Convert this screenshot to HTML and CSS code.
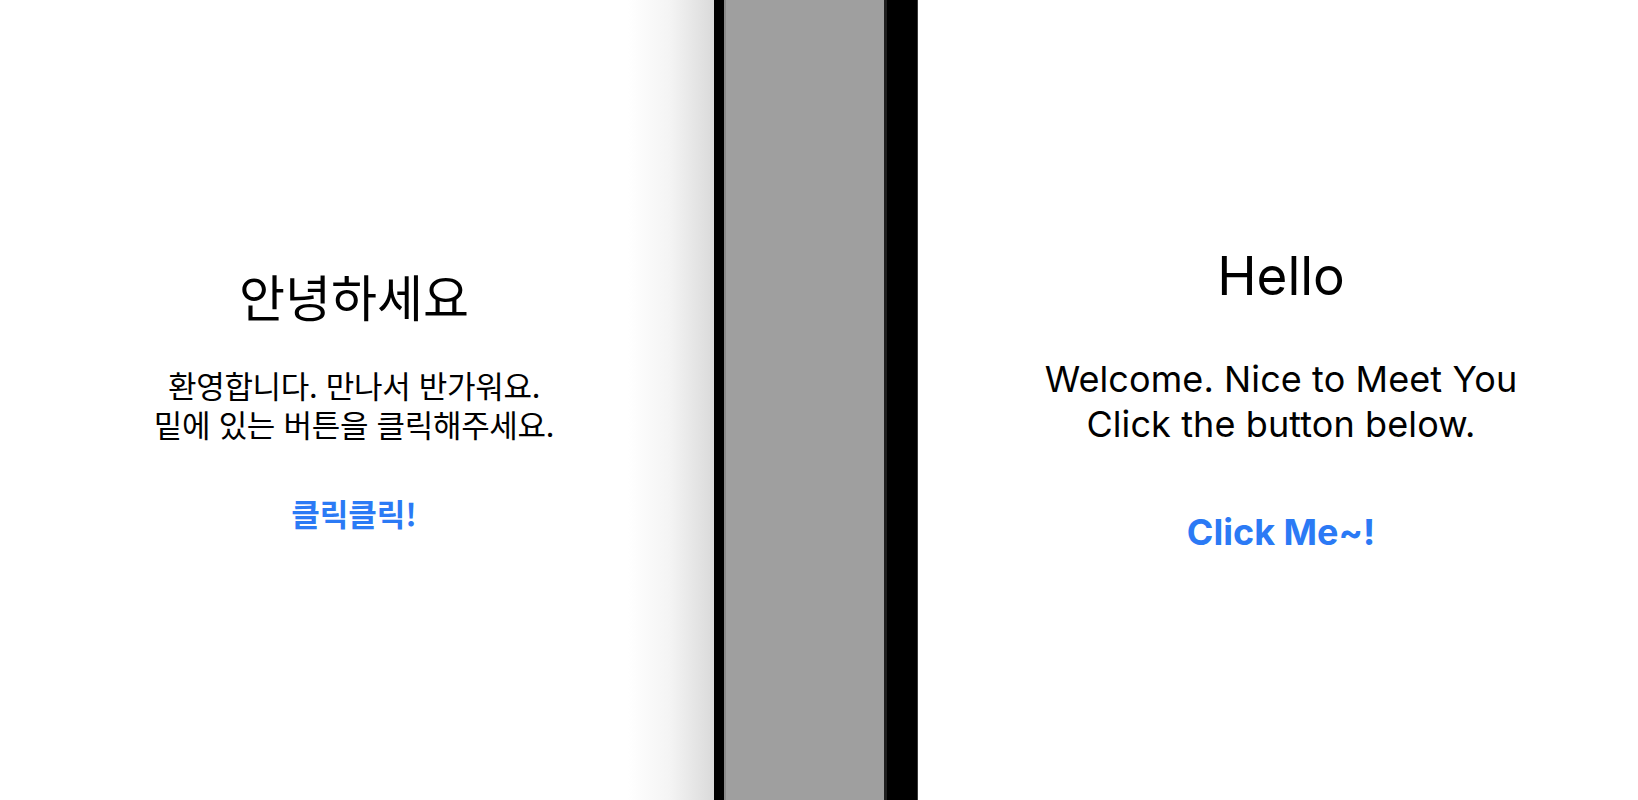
FILE: index.html
```html
<!DOCTYPE html>
<html lang="ko">
<head>
<meta charset="utf-8">
<title>Hello</title>
<link rel="stylesheet" href="styles.css">
</head>
<body>
<div class="screen">
  <section class="panel panel-left">
    <h1 class="title title-ko">안녕하세요</h1>
    <p class="message message-ko">환영합니다. 만나서 반가워요.
밑에 있는 버튼을 클릭해주세요.</p>
    <button class="action action-ko" type="button">클릭클릭!</button>
  </section>
  <div class="divider">
    <div class="edge-black"></div>
    <div class="edge-light"></div>
    <div class="gray-block"></div>
    <div class="edge-dark"></div>
    <div class="black-block"></div>
    <div class="edge-faint"></div>
  </div>
  <section class="panel panel-right">
    <h1 class="title title-en">Hello</h1>
    <p class="message message-en">Welcome. Nice to Meet You
Click the button below.</p>
    <button class="action action-en" type="button">Click Me~!</button>
  </section>
</div>
</body>
</html>
```
FILE: styles.css
```css
html, body {
  margin: 0;
  padding: 0;
  background: #ffffff;
}

.screen {
  display: flex;
  width: 1638px;
  height: 800px;
  overflow: hidden;
}

.panel {
  display: flex;
  flex-direction: column;
  align-items: center;
  box-sizing: border-box;
  color: #000;
}

.panel-left {
  width: 714px;
  padding-right: 6px;
  padding-top: 262px;
  background: linear-gradient(90deg, #ffffff 0, #ffffff 628px, #f4f4f4 670px, #dadada 714px);
  font-family: "Noto Sans CJK KR", "Noto Sans", sans-serif;
}

.panel-right {
  flex: 1;
  padding-top: 243px;
  padding-left: 6px;
  background: #ffffff;
  font-family: "Inter", "Liberation Sans", sans-serif;
}

.title {
  margin: 0;
  font-weight: 400;
}

.title-ko {
  font-size: 50px;
  line-height: 66px;
}

.title-en {
  font-size: 53px;
  line-height: 66px;
}

.message {
  margin: 0;
  text-align: center;
  font-weight: 400;
  white-space: pre-line;
}

.message-ko {
  margin-top: 37px;
  font-size: 31px;
  line-height: 39px;
  letter-spacing: -0.3px;
}

.message-en {
  margin-top: 48px;
  font-size: 36px;
  line-height: 45px;
  letter-spacing: 0.1px;
}

.action {
  border: 0;
  background: none;
  padding: 0;
  color: #2b7af5;
  font-weight: 700;
  cursor: pointer;
}

.action-ko {
  margin-top: 50px;
  font-family: "Noto Sans CJK KR", "Noto Sans", sans-serif;
  font-size: 31px;
  line-height: 40px;
}

.action-en {
  margin-top: 63px;
  font-family: "Inter", "Liberation Sans", sans-serif;
  font-size: 36px;
  line-height: 44px;
}

.divider {
  display: flex;
  height: 800px;
}

.edge-black {
  width: 10px;
  background: #000;
}

.edge-light {
  width: 2px;
  background: #8a8a8a;
}

.gray-block {
  width: 158px;
  background: #9f9f9f;
}

.edge-dark {
  width: 3px;
  background: #1f1f1f;
}

.black-block {
  width: 30px;
  background: #000;
}

.edge-faint {
  width: 1px;
  background: #3a3a3a;
}
```
